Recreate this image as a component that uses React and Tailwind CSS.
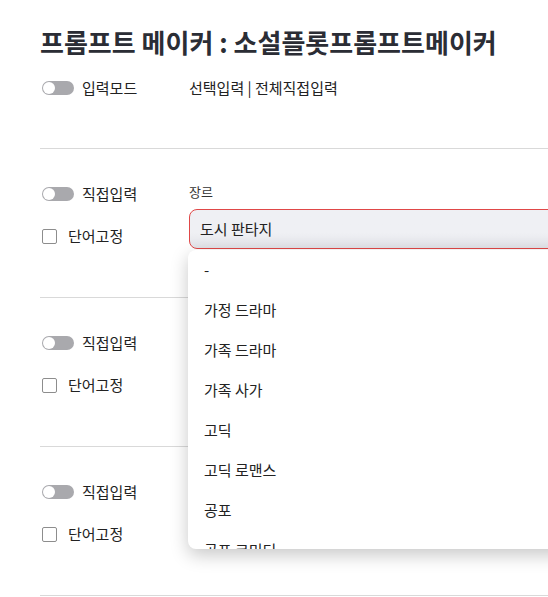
import React from "react";

function Toggle({ label }) {
  return (
    <div className="flex h-6 items-center">
      <div className="relative h-[14px] w-8 rounded-full bg-[#a9a9ad]">
        <div className="absolute left-[1px] top-[1px] h-3 w-3 rounded-full bg-white" />
      </div>
      <span className="ml-2 text-[15px] text-[#222]">{label}</span>
    </div>
  );
}

function Check() {
  return (
    <div className="mt-[18px] flex h-6 items-center">
      <div className="h-[15px] w-[15px] rounded-[2px] border border-[#8d8d8d] bg-white" />
      <span className="ml-[11px] text-[15px] text-[#222]">단어고정</span>
    </div>
  );
}

function Section({ children }) {
  return (
    <div className="flex h-[149px] border-t border-[#d9d9d9] pt-[33px]">
      <div className="flex w-[149px] shrink-0 flex-col pl-[2px]">
        <Toggle label="직접입력" />
        <Check />
      </div>
      <div className="flex-1">{children}</div>
    </div>
  );
}

const items = ["-", "가정 드라마", "가족 드라마", "가족 사가", "고딕", "고딕 로맨스", "공포", "공포 코미디"];

export default function App() {
  return (
    <div className="relative h-[597px] w-[548px] overflow-hidden bg-white font-['Noto_Sans_CJK_KR','Noto_Sans',sans-serif] text-[#222]">
      <div className="pl-10 pt-6">
        <h1 className="text-[26px] font-bold leading-9 text-[#2b2d35]">프롬프트 메이커 : 소설플롯프롬프트메이커</h1>
        <div className="mt-4 flex items-center">
          <div className="w-[149px] shrink-0 pl-[2px]">
            <Toggle label="입력모드" />
          </div>
          <span className="text-[15px] text-[#222]">선택입력 | 전체직접입력</span>
        </div>
        <div className="mt-12">
          <Section>
            <div className="text-[13px] leading-5 text-[#333]">장르</div>
            <div className="mt-[7px] flex h-10 w-[420px] items-center rounded-lg border border-[#e04848] bg-gradient-to-b from-[#eff0f4] from-60% to-[#e2e3e8] pl-[10px] text-[15px] text-[#222]">
              도시 판타지
            </div>
          </Section>
          <Section />
          <Section />
          <div className="border-t border-[#d9d9d9]" />
        </div>
      </div>
      <div className="absolute left-[188px] top-[250px] h-[299px] w-[420px] overflow-hidden rounded-lg bg-white shadow-[0_6px_18px_rgba(0,0,0,0.22)]">
        {items.map((it) => (
          <div key={it} className="flex h-10 items-center px-4 text-[15px] text-[#222]">
            {it}
          </div>
        ))}
      </div>
    </div>
  );
}
